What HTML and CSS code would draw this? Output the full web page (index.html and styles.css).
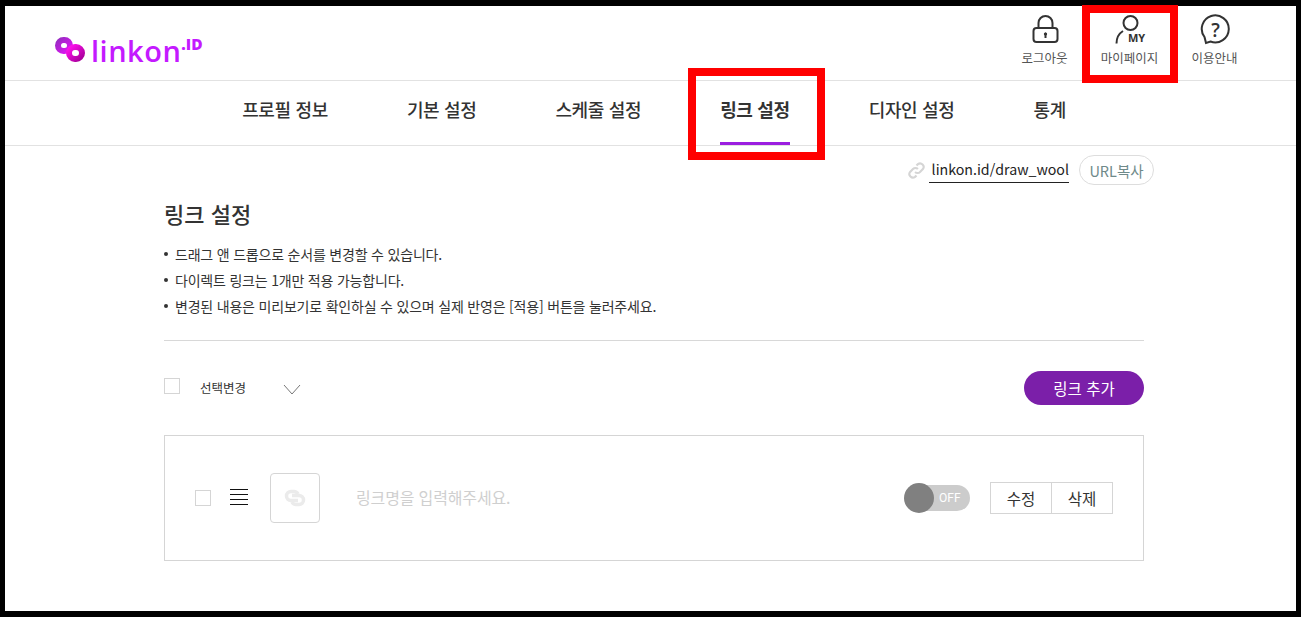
FILE: index.html
```html
<!DOCTYPE html>
<html lang="ko">
<head>
    <meta charset="UTF-8">
    <title>linkon.ID 링크 설정</title>
    <link rel="stylesheet" href="styles.css">
</head>
<body>
    <div class="frame">
        <header class="top">
            <a class="logo">
                <svg class="logo-mark" width="32" height="28" viewBox="0 0 32 28" fill="none" stroke-width="6">
                    <defs>
                        <linearGradient id="logoA" x1="0" y1="0" x2="1" y2="1">
                            <stop offset="0" stop-color="#9a2bc4"/>
                            <stop offset="1" stop-color="#e014f4"/>
                        </linearGradient>
                        <linearGradient id="logoB" x1="0" y1="0" x2="1" y2="1">
                            <stop offset="0" stop-color="#ff10ee"/>
                            <stop offset="1" stop-color="#a8009a"/>
                        </linearGradient>
                    </defs>
                    <rect x="3" y="4" width="12" height="11" rx="5.500" stroke="url(#logoA)"/>
                    <rect x="14" y="11" width="13" height="12" rx="6" stroke="url(#logoB)"/>
                </svg>
                <span class="logo-text">linkon</span><span class="logo-id">.ID</span>
            </a>
            <div class="top-menu">
                <a class="top-item">
                    <svg width="28" height="32" viewBox="0 0 28 32" fill="none" stroke="#333" stroke-width="2">
                        <rect x="2.500" y="14" width="24" height="14" rx="3"/>
                        <path d="M7.500 14V9a7 7 0 0 1 14 0v5"/>
                        <circle cx="14.500" cy="20" r="1.200" fill="#333" stroke-width="1"/>
                        <path d="M14.500 20v4"/>
                    </svg>
                    <span>로그아웃</span>
                </a>
                <a class="top-item">
                    <svg width="32" height="32" viewBox="0 0 32 32" fill="none" stroke="#333" stroke-width="2">
                        <circle cx="16.500" cy="9" r="7"/>
                        <path d="M2.500 29.500c0-6 2.500-10 6.500-12.500"/>
                        <text class="my-mark" x="14" y="28">MY</text>
                    </svg>
                    <span>마이페이지</span>
                </a>
                <a class="top-item">
                    <svg width="32" height="32" viewBox="0 0 32 32" fill="none" stroke="#333" stroke-width="2">
                        <path d="M5.500 23A13.500 13.500 0 1 1 11.500 27.500L7 29z"/>
                        <text class="help-mark" x="16.500" y="23">?</text>
                    </svg>
                    <span>이용안내</span>
                </a>
            </div>
        </header>

        <nav class="tabs">
            <a>프로필 정보</a>
            <a>기본 설정</a>
            <a>스케줄 설정</a>
            <a class="on">링크 설정</a>
            <a>디자인 설정</a>
            <a>통계</a>
        </nav>

        <div class="url-row">
            <svg width="17" height="17" viewBox="0 0 24 24" fill="none" stroke="#d5d5d5" stroke-width="3">
                <path d="M10 14a5 5 0 0 0 7 0l4-4a5 5 0 0 0-7-7l-2 2"/>
                <path d="M14 10a5 5 0 0 0-7 0l-4 4a5 5 0 0 0 7 7l2-2"/>
            </svg>
            <span class="my-url">linkon.id/draw_wool</span>
            <button type="button" class="copy-btn">URL복사</button>
        </div>

        <main class="content">
            <h1>링크 설정</h1>
            <ul class="notice">
                <li>드래그 앤 드롭으로 순서를 변경할 수 있습니다.</li>
                <li>다이렉트 링크는 1개만 적용 가능합니다.</li>
                <li>변경된 내용은 미리보기로 확인하실 수 있으며 실제 반영은 [적용] 버튼을 눌러주세요.</li>
            </ul>

            <div class="toolbar">
                <span class="check"></span>
                <span class="select-label">선택변경</span>
                <svg class="chevron" width="18" height="11" viewBox="0 0 18 11" fill="none" stroke="#777" stroke-width="1">
                    <path d="M1 1l8 9 8-9"/>
                </svg>
                <button type="button" class="add-btn">링크 추가</button>
            </div>

            <div class="link-card">
                <span class="check"></span>
                <span class="handle"><i></i><i></i><i></i><i></i></span>
                <span class="thumb">
                    <svg width="24" height="24" viewBox="0 0 24 24" fill="none" stroke="#ebebeb" stroke-width="3.500">
                        <path d="M15 8a4.500 4.500 0 0 0-4-2.500H8a4.500 4.500 0 0 0 0 9h7"/>
                        <path d="M9 16a4.500 4.500 0 0 0 4 2.500h3a4.500 4.500 0 0 0 0-9H9"/>
                    </svg>
                </span>
                <span class="link-name">링크명을 입력해주세요.</span>
                <span class="toggle"><b></b><em>OFF</em></span>
                <div class="btn-pair">
                    <button type="button">수정</button>
                    <button type="button">삭제</button>
                </div>
            </div>
        </main>
    </div>

    <div class="mark mark-my"></div>
    <div class="mark mark-tab"></div>
</body>
</html>
```

FILE: styles.css
```css
* {
    box-sizing: border-box;
}
html, body {
    height: 617px;
    margin: 0;
    overflow: hidden;
}
body {
    position: relative;
    padding: 6px 5px;
    background-color: #000000;
    font-family: "Noto Sans CJK KR", "Noto Sans", sans-serif;
    color: #333333;
}
button {
    font-family: inherit;
    cursor: pointer;
}
.frame {
    height: 605px;
    background-color: #ffffff;
}

/* top */
.top {
    display: flex;
    align-items: flex-start;
    justify-content: space-between;
    height: 75px;
    padding-right: 39px;
    border-bottom: 1px solid #e2e2e2;
}
.logo {
    display: flex;
    align-items: flex-start;
    margin: 30px 0 0 50px;
    color: #c41aff;
}
.logo-text {
    margin-left: 4px;
    font-family: "Open Sans", sans-serif;
    font-size: 29px;
    font-weight: 600;
    line-height: 30px;
    letter-spacing: 0.500px;
}
.logo-id {
    margin-top: -2px;
    font-family: "Open Sans", sans-serif;
    font-size: 15.500px;
    font-weight: 800;
    line-height: 20px;
}
.top-menu {
    display: flex;
}
.top-item {
    display: flex;
    flex-direction: column;
    align-items: center;
    width: 85px;
    padding-top: 8px;
    font-size: 12.500px;
    line-height: 20px;
    color: #555555;
}
.top-item svg {
    display: block;
    margin-bottom: 2px;
}
.my-mark {
    font-family: "Open Sans", sans-serif;
    font-size: 11px;
    font-weight: 700;
    fill: #333333;
    stroke: none;
}
.help-mark {
    font-family: "Open Sans", sans-serif;
    font-size: 19px;
    font-weight: 600;
    text-anchor: middle;
    fill: #333333;
    stroke: none;
}

/* tabs */
.tabs {
    display: flex;
    justify-content: center;
    gap: 79px;
    height: 65px;
    padding-left: 7px;
    border-bottom: 1px solid #e2e2e2;
}
.tabs a {
    height: 64px;
    padding-top: 15px;
    font-size: 18px;
    font-weight: 500;
    line-height: 27px;
    letter-spacing: -0.350px;
    color: #333333;
}
.tabs a.on {
    font-weight: 700;
    border-bottom: 3px solid #9b1ee0;
}

/* url */
.url-row {
    display: flex;
    align-items: center;
    justify-content: flex-end;
    height: 30px;
    margin-top: 9px;
    padding-right: 142px;
}
.my-url {
    align-self: flex-start;
    height: 28px;
    margin-left: 4px;
    padding-left: 3px;
    font-size: 14.200px;
    line-height: 28px;
    color: #222222;
    border-bottom: 1px solid #222222;
}
.copy-btn {
    width: 75px;
    height: 30px;
    margin-left: 10px;
    padding: 0;
    font-size: 14.500px;
    color: #6f8a8a;
    background-color: #ffffff;
    border: 1px solid #dddddd;
    border-radius: 15px;
}

/* content */
.content {
    width: 980px;
    margin-left: 159px;
}
h1 {
    margin: 12px 0 0;
    font-size: 22px;
    font-weight: 500;
    line-height: 32px;
    color: #333333;
}
.notice {
    margin: 12px 0 0;
    padding: 0 0 21px;
    list-style: none;
    border-bottom: 1px solid #d8d8d8;
}
.notice li {
    position: relative;
    padding-left: 11px;
    font-size: 14px;
    line-height: 26px;
    letter-spacing: -0.200px;
    color: #333333;
}
.notice li::before {
    content: "";
    position: absolute;
    left: 0;
    top: 11px;
    width: 4px;
    height: 4px;
    border-radius: 50%;
    background-color: #333333;
}
.check {
    flex: none;
    display: block;
    width: 16px;
    height: 16px;
    border: 1px solid #d5d5d5;
}
.toolbar {
    display: flex;
    align-items: center;
    height: 34px;
    margin: 30px 0;
}
.toolbar .check {
    margin-bottom: 4px;
}
.select-label {
    margin-left: 20px;
    margin-bottom: 2px;
    font-size: 12.500px;
    color: #333333;
}
.chevron {
    margin-left: 37px;
    margin-top: 2px;
}
.add-btn {
    width: 120px;
    height: 34px;
    margin-left: auto;
    padding: 0;
    font-size: 15.500px;
    color: #ffffff;
    background-color: #7b1fa9;
    border: none;
    border-radius: 17px;
}

/* link row */
.link-card {
    display: flex;
    align-items: center;
    height: 126px;
    padding: 0 30px;
    border: 1px solid #d5d5d5;
}
.handle {
    display: flex;
    flex-direction: column;
    gap: 4px;
    width: 18px;
    margin-left: 19px;
    margin-top: -2px;
}
.handle i {
    display: block;
    height: 1px;
    background-color: #111111;
}
.thumb {
    display: flex;
    align-items: center;
    justify-content: center;
    width: 50px;
    height: 50px;
    margin-left: 22px;
    border: 1px solid #d5d5d5;
    border-radius: 4px;
}
.link-name {
    margin-left: 36px;
    margin-bottom: 2px;
    font-size: 16px;
    letter-spacing: -0.150px;
    color: #cfcfcf;
}
.toggle {
    position: relative;
    display: block;
    width: 60px;
    height: 26px;
    margin-left: auto;
    background-color: #cccccc;
    border-radius: 13px;
}
.toggle b {
    position: absolute;
    left: -6px;
    top: -2px;
    width: 30px;
    height: 30px;
    border-radius: 50%;
    background-color: #808080;
}
.toggle em {
    position: absolute;
    left: 29px;
    top: 0;
    font-family: "Roboto", sans-serif;
    font-size: 12px;
    font-style: normal;
    line-height: 26px;
    color: #ffffff;
}
.btn-pair {
    display: flex;
    margin-left: 20px;
    border: 1px solid #d5d5d5;
}
.btn-pair button {
    width: 61px;
    height: 30px;
    padding: 0;
    font-size: 15.500px;
    color: #333333;
    background-color: #ffffff;
    border: none;
}
.btn-pair button:first-child {
    width: 60px;
}
.btn-pair button + button {
    border-left: 1px solid #d5d5d5;
}

/* red marks painted over the shot */
.mark {
    position: absolute;
    border: 8px solid #ff0000;
}
.mark-my {
    left: 1082px;
    top: 5px;
    width: 96px;
    height: 78px;
}
.mark-tab {
    left: 688px;
    top: 68px;
    width: 137px;
    height: 92px;
}
```
